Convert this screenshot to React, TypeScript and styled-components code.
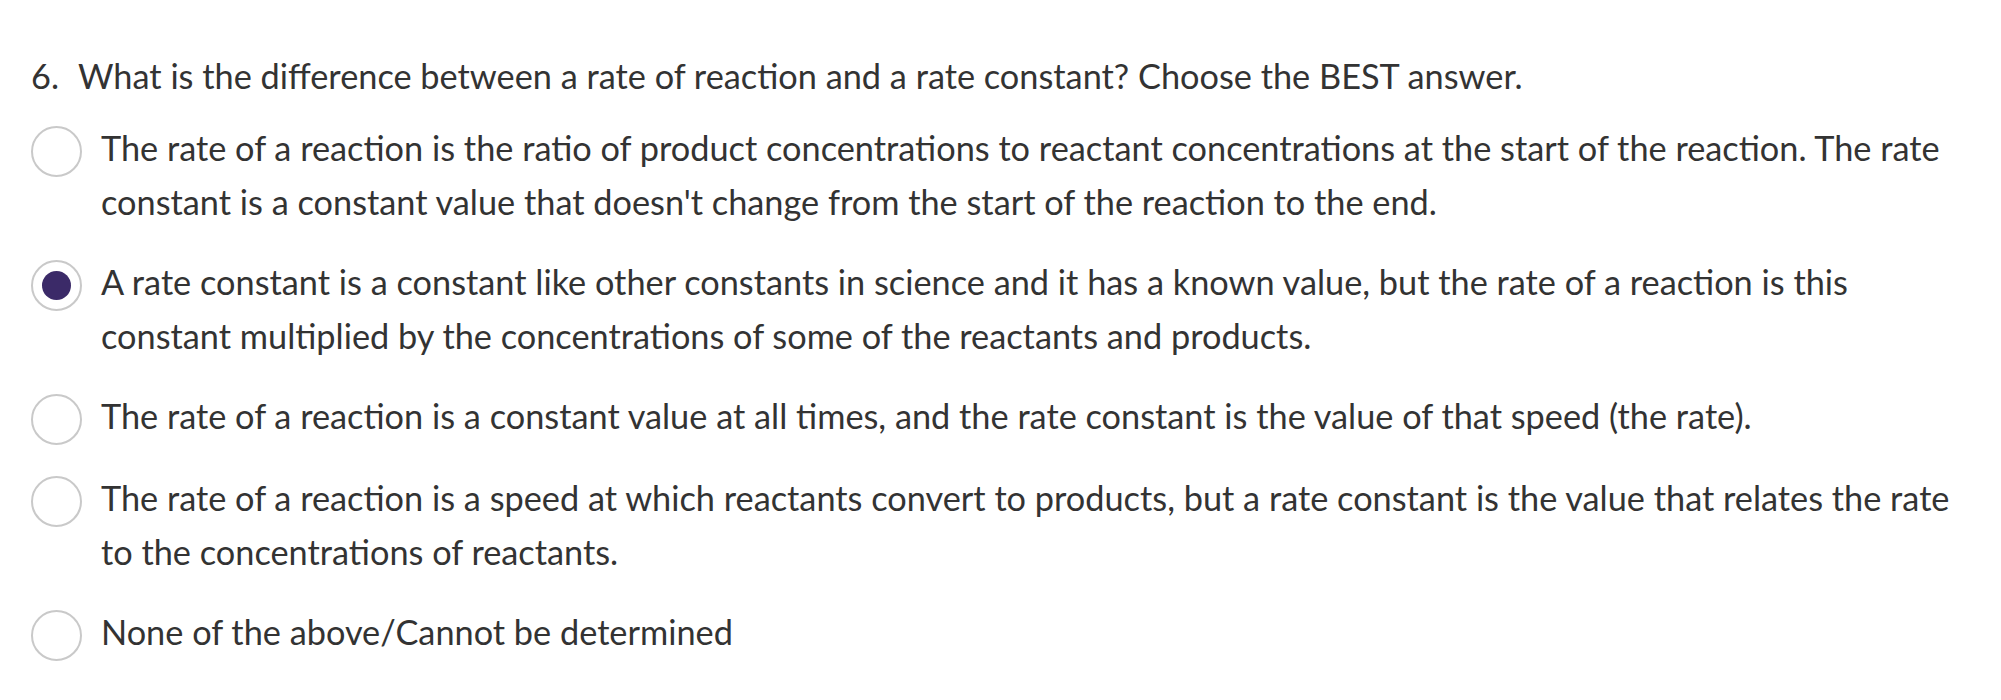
import React from "react";
import styled, { createGlobalStyle } from "styled-components";

const Global = createGlobalStyle`
  html, body { margin: 0; padding: 0; background: #ffffff; }
  body { font-family: Lato, "Open Sans", Arial, sans-serif; color: #333333; }
`;

const Page = styled.div`
  padding: 49px 0 0 31px;
  width: 1934px;
`;

const Question = styled.div`
  display: flex;
  font-size: 34.3px;
  line-height: 54px;
  margin-bottom: 18px;
`;

const QNum = styled.span`
  width: 47px;
  flex: none;
`;

const Options = styled.div`
  display: flex;
  flex-direction: column;
  gap: 26px;
`;

const Option = styled.label`
  display: flex;
  align-items: flex-start;
  gap: 19px;
  cursor: pointer;
`;

const Radio = styled.span<{ $checked?: boolean }>`
  flex: none;
  box-sizing: border-box;
  width: 51px;
  height: 51px;
  margin-top: 5px;
  border-radius: 50%;
  border: 2px solid #c9c9c9;
  background: #ffffff;
  display: flex;
  align-items: center;
  justify-content: center;
  &::after {
    content: "";
    width: 29px;
    height: 29px;
    border-radius: 50%;
    background: ${(p) => (p.$checked ? "#3b2a68" : "transparent")};
  }
`;

const OptionText = styled.span`
  font-size: 34.3px;
  line-height: 54px;
  flex: 1;
`;

const options = [
  "The rate of a reaction is the ratio of product concentrations to reactant concentrations at the start of the reaction. The rate constant is a constant value that doesn't change from the start of the reaction to the end.",
  "A rate constant is a constant like other constants in science and it has a known value, but the rate of a reaction is this constant multiplied by the concentrations of some of the reactants and products.",
  "The rate of a reaction is a constant value at all times, and the rate constant is the value of that speed (the rate).",
  "The rate of a reaction is a speed at which reactants convert to products, but a rate constant is the value that relates the rate to the concentrations of reactants.",
  "None of the above/Cannot be determined",
];

export default function App() {
  return (
    <>
      <Global />
      <Page>
        <Question>
          <QNum>6.</QNum>
          <span>What is the difference between a rate of reaction and a rate constant? Choose the BEST answer.</span>
        </Question>
        <Options>
          {options.map((t, i) => (
            <Option key={i}>
              <Radio $checked={i === 1} />
              <OptionText>{t}</OptionText>
            </Option>
          ))}
        </Options>
      </Page>
    </>
  );
}
